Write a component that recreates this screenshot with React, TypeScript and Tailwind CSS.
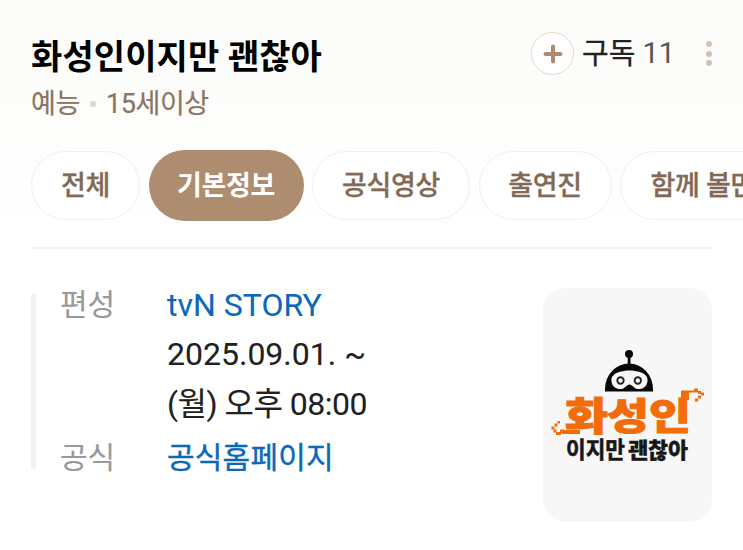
import { clsx } from 'clsx';

const tabs = [
  { label: '전체', width: 'w-[109px]' },
  { label: '기본정보', width: 'w-[155px]', active: true },
  { label: '공식영상', width: 'w-[158px]' },
  { label: '출연진', width: 'w-[133px]' },
  { label: '함께 볼만한', width: 'w-[190px]' },
];

function Logo() {
  return (
    <svg viewBox="0 0 169 234" className="h-full w-full">
      <g fill="#080808">
        <circle cx="86" cy="66" r="4" />
        <path d="M84.700 68h2.800v9h-2.800z" />
        <path d="M62 103.500V101a24 25.500 0 0 1 48 0v2.500z" />
      </g>
      <path
        fill="#f7f7f7"
        d="M78 83.500c5-1.500 12-1.500 17 0 7 1.500 10 5 9.500 9.500-.7 6-5 8.500-10 8-4-.5-5-4.500-8-4.500s-4 4-8 4.500c-5 .5-9.500-2-10-8-.5-4.500 2.500-8 9.500-9.500z"
      />
      <circle cx="77.500" cy="92.500" r="3.200" fill="none" stroke="#222" strokeWidth="1.900" />
      <circle cx="94.800" cy="92.500" r="3.200" fill="none" stroke="#222" strokeWidth="1.900" />
      <g fill="#f36c0b" stroke="#f36c0b" strokeWidth="1" fontWeight="900">
        <text x="22" y="142" fontSize="39" textLength="43" lengthAdjust="spacingAndGlyphs">
          화
        </text>
        <text x="64" y="142" fontSize="37" textLength="84" lengthAdjust="spacingAndGlyphs">
          성인
        </text>
      </g>
      <g fill="#f36c0b">
        <path d="M19 142h18v4H19z" />
        <path d="M138 112v-9.500h13v-2h4v2.500h3v3h-3v-1.500h-9v7.500z" />
        <path d="M158 104.500h3v3h-3zM155 107.500h3v3h-3zM152 110.500h3v3h-3z" />
        <path d="M14.500 133h2.500v2.500h-2.500zM11.500 135.500h3v3h-3zM8.500 138.500h3v3h-3zM10.500 141.500h3v3h-3z" />
        <path d="M13 144h4v-2.500h4v4h-3v1.500h-5z" />
      </g>
      <g fill="#171717" stroke="#171717">
        <text
          x="23"
          y="170"
          fontSize="23"
          fontWeight="700"
          strokeWidth=".6"
          textLength="59"
          lengthAdjust="spacingAndGlyphs"
        >
          이지만
        </text>
        <text
          x="85"
          y="170"
          fontSize="22"
          fontWeight="900"
          strokeWidth=".3"
          textLength="60"
          lengthAdjust="spacingAndGlyphs"
        >
          괜찮아
        </text>
      </g>
    </svg>
  );
}

export default function App() {
  return (
    <div className="h-[550px] w-[743px] overflow-hidden bg-linear-to-b from-[#fbfbf9] to-white to-[240px] pl-[31px] font-[Roboto,'Noto_Sans_CJK_KR',sans-serif]">
      <header className="flex h-[150px] justify-between pt-8">
        <div>
          <h1 className="h-12 text-[34px] leading-[50px] font-bold tracking-[0.1px] whitespace-nowrap text-black">
            화성인이지만 괜찮아
          </h1>
          <p className="flex h-12 items-center text-[27px] leading-[48px] tracking-[-0.4px] whitespace-nowrap text-[#8b7461] [-webkit-text-stroke:0.2px]">
            예능
            <span className="mr-[10px] ml-[10px] size-[6px] rounded-full bg-[#ddd6cf]" />
            15세이상
          </p>
        </div>
        <div className="flex h-[43px] items-center pr-[31px]">
          <button
            type="button"
            aria-label="구독 추가"
            className="flex size-[43px] items-center justify-center rounded-full border border-[#e3d8ce] bg-white"
          >
            <svg viewBox="0 0 20 20" className="size-5" stroke="#ad8c6d" strokeWidth="4" strokeLinecap="round">
              <path d="M10 2.500v15M2.500 10h15" />
            </svg>
          </button>
          <span className="ml-2 pt-0.5 text-[29px] leading-[43px] text-[#222] [-webkit-text-stroke:0.3px]">구독</span>
          <span className="ml-[7px] text-[29px] leading-[43px] text-[#555]">11</span>
          <button type="button" aria-label="더보기" className="ml-[31px] flex flex-col gap-[3.500px]">
            <span className="size-[6px] rounded-full bg-[#d3c2b4]" />
            <span className="size-[6px] rounded-full bg-[#d3c2b4]" />
            <span className="size-[6px] rounded-full bg-[#d3c2b4]" />
          </button>
        </div>
      </header>

      <nav className="flex h-[71px] items-center gap-[8.500px]">
        {tabs.map((tab) => (
          <button
            key={tab.label}
            type="button"
            className={clsx(
              'flex shrink-0 items-center justify-center rounded-full pt-0.5 text-[27px] leading-none tracking-[-0.3px] whitespace-nowrap',
              tab.width,
              tab.active
                ? 'h-[71px] bg-[#ad8c6f] font-bold text-white'
                : 'h-[69px] border border-[#f0efec] bg-white font-medium text-[#826954] [-webkit-text-stroke:0.3px]'
            )}
          >
            {tab.label}
          </button>
        ))}
      </nav>

      <div className="mt-[26px] mr-[31px] h-[2px] bg-[#f2f1ed]" />

      <section className="mt-[39px] mr-[31px] flex justify-between">
        <div className="flex">
          <div className="mt-[5px] h-[176px] w-[5px] rounded-sm bg-[#f3f2ed]" />
          <dl className="ml-6 grid grid-cols-[107px_auto] content-start text-[30px] whitespace-nowrap [-webkit-text-stroke:0.1px]">
            <dt className="leading-[34px] text-[#999]">편성</dt>
            <dd className="text-[32px] text-[#212121]">
              <a className="block h-[41px] leading-[34px] text-[#0c68b8]">tvN STORY</a>
              <span className="block h-[50px] leading-[50px]">2025.09.01. ~</span>
              <span className="block h-[50px] leading-[50px] tracking-[-0.5px]">(월) 오후 08:00</span>
            </dd>
            <dt className="mt-[3px] leading-[52px] text-[#999]">공식</dt>
            <dd className="mt-[3px] leading-[52px] tracking-[0.2px] text-[#0c68b8] [-webkit-text-stroke:0.4px]">
              공식홈페이지
            </dd>
          </dl>
        </div>
        <div className="h-[234px] w-[169px] overflow-hidden rounded-[22px] bg-[#f7f7f7]">
          <Logo />
        </div>
      </section>
    </div>
  );
}
